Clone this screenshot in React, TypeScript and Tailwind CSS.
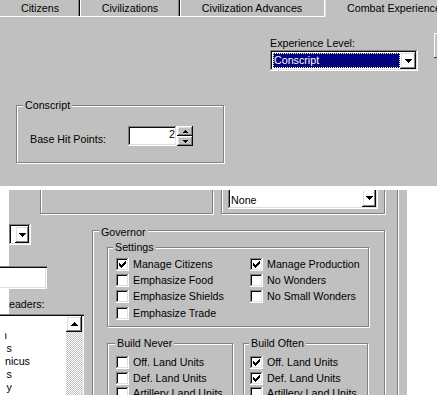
import React from "react";

const F = "font-['Liberation_Sans',Arial,sans-serif] text-[10.7px] leading-[13px] text-black";
const RAISED = "shadow-[inset_-1px_-1px_#0a0a0a,inset_1px_1px_#ffffff,inset_-2px_-2px_#808080,inset_2px_2px_#dfdfdf]";
const SUNKEN = "shadow-[inset_-1px_-1px_#ffffff,inset_1px_1px_#808080,inset_-2px_-2px_#dfdfdf,inset_2px_2px_#0a0a0a]";
const ETCH = "border border-[#808080] shadow-[inset_1px_1px_#ffffff,1px_1px_#ffffff]";

function DownArrow() {
  return (
    <svg width="7" height="4" viewBox="0 0 7 4" shapeRendering="crispEdges">
      <path d="M0 0h7v1H0zM1 1h5v1H1zM2 2h3v1H2zM3 3h1v1H3z" fill="#000" />
    </svg>
  );
}
function UpArrow() {
  return (
    <svg width="7" height="4" viewBox="0 0 7 4" shapeRendering="crispEdges">
      <path d="M3 0h1v1H3zM2 1h3v1H2zM1 2h5v1H1zM0 3h7v1H0z" fill="#000" />
    </svg>
  );
}
function SmallUp() {
  return (
    <svg width="5" height="3" viewBox="0 0 5 3" shapeRendering="crispEdges">
      <path d="M2 0h1v1H2zM1 1h3v1H1zM0 2h5v1H0z" fill="#000" />
    </svg>
  );
}
function SmallDown() {
  return (
    <svg width="5" height="3" viewBox="0 0 5 3" shapeRendering="crispEdges">
      <path d="M0 0h5v1H0zM1 1h3v1H1zM2 2h1v1H2z" fill="#000" />
    </svg>
  );
}
function Check() {
  return (
    <svg width="7" height="7" viewBox="0 0 7 7" shapeRendering="crispEdges">
      <path d="M0 2h1v3H0zM1 3h1v3H1zM2 4h1v3H2zM3 3h1v3H3zM4 2h1v3H4zM5 1h1v3H5zM6 0h1v3H6z" fill="#000" />
    </svg>
  );
}
function CheckBox({ checked }: { checked?: boolean }) {
  return (
    <div className={`w-[13px] h-[13px] shrink-0 bg-white flex items-center justify-center ${SUNKEN}`}>
      {checked && <Check />}
    </div>
  );
}
function CheckRow({ label, checked, h }: { label: string; checked?: boolean; h: string }) {
  return (
    <div className={`flex items-center ${h}`}>
      <CheckBox checked={checked} />
      <span className="ml-[4px] whitespace-nowrap">{label}</span>
    </div>
  );
}

function TopPanel() {
  return (
    <div className={`w-[437px] h-[186px] bg-[#c0c0c0] overflow-hidden ${F}`}>
      <div className="flex h-[17px]">
        <div className="w-[80px] shrink-0 border-b border-white shadow-[inset_-1px_0_#000000,inset_-2px_0_#808080] pt-[1.5px] text-center whitespace-nowrap">
          Citizens
        </div>
        <div className="w-[100px] shrink-0 border-b border-white shadow-[inset_1px_0_#ffffff,inset_-1px_0_#000000,inset_-2px_0_#808080] pt-[1.5px] text-center whitespace-nowrap">
          Civilizations
        </div>
        <div className="w-[144px] shrink-0 border-b border-white shadow-[inset_1px_0_#ffffff] pt-[1.5px] text-center whitespace-nowrap">
          Civilization Advances
        </div>
        <div className="flex-1 shadow-[inset_1px_0_#ffffff,inset_2px_0_#dfdfdf] pt-[1.5px] pl-[23px] whitespace-nowrap overflow-hidden">
          Combat Experience
        </div>
      </div>

      <div className="flex items-start">
        <div className="ml-[270px] w-[148px] shrink-0 pt-[20px]">
          <div className="whitespace-nowrap">Experience Level:</div>
          <div className={`h-[21px] bg-white p-[2px] flex ${SUNKEN}`}>
            <div className="flex-1 my-[1px] ml-[1px] bg-[#000080] text-white border border-dotted border-[#ffffa0] whitespace-nowrap">
              Conscript
            </div>
            <div className={`w-[16px] h-[17px] flex items-center justify-center ${RAISED}`}>
              <DownArrow />
            </div>
          </div>
        </div>
        <div className="ml-[16px] mt-[16px] w-[6px] h-[24px] shrink-0 border-l border-t border-white shadow-[0_1px_#404040]" />
      </div>

      <div className={`ml-[16px] mt-[34px] w-[208px] h-[58px] ${ETCH}`}>
        <div className="w-fit -mt-[7px] ml-[6px] px-[2px] bg-[#c0c0c0] whitespace-nowrap">Conscript</div>
        <div className="flex items-start mt-[14px] ml-[13px]">
          <div className="w-[98px] shrink-0 pt-[7px] whitespace-nowrap">Base Hit Points:</div>
          <div className="flex">
            <div className={`w-[49px] h-[20px] bg-white text-right pr-[2px] pt-[2px] ${SUNKEN}`}>2</div>
            <div className="flex flex-col w-[16px]">
              <div className={`h-[10px] flex items-center justify-center ${RAISED}`}>
                <SmallUp />
              </div>
              <div className={`h-[10px] flex items-center justify-center ${RAISED}`}>
                <SmallDown />
              </div>
            </div>
          </div>
        </div>
      </div>
    </div>
  );
}

function BottomPanel() {
  return (
    <div className="flex mt-[4px]">
      <div className="w-[9px] shrink-0" />
      <div className={`w-[398px] h-[205px] shrink-0 bg-[#c0c0c0] overflow-y-clip ${F}`}>
        <div className="w-[389px] h-full border-r border-[#808080] shadow-[1px_0_#ffffff]">
          {/* Row A */}
          <div className="flex items-start h-[24px]">
            <div className="ml-[31px] w-[173px] h-[24px] shrink-0 border-x border-b border-[#808080] shadow-[inset_1px_0_#ffffff,1px_1px_#ffffff]" />
            <div className="ml-[8px] w-[164px] h-[24px] shrink-0 border-x border-b border-[#808080] shadow-[inset_1px_0_#ffffff,1px_1px_#ffffff] flex items-start">
              <div className={`ml-[6px] -mt-[4px] w-[150px] h-[23px] shrink-0 bg-white flex ${SUNKEN}`}>
                <div className="flex-1 pl-[3px] pt-[8px] whitespace-nowrap">None</div>
                <div className={`w-[14px] h-[19px] mt-[2px] mr-[2px] flex items-center justify-center ${RAISED}`}>
                  <DownArrow />
                </div>
              </div>
            </div>
          </div>

          {/* Row B */}
          <div className="flex items-start">
            <div className="w-[75px] shrink-0 flex flex-col">
              <div className={`mt-[10px] w-[22px] h-[21px] bg-white flex justify-end p-[2px] ${SUNKEN}`}>
                <div className={`w-[14px] h-full flex items-center justify-center ${RAISED}`}>
                  <DownArrow />
                </div>
              </div>
              <div className="mt-[21px] -ml-[9px] w-[47px] h-[23px] bg-white shadow-[inset_0_1px_#808080,inset_0_2px_#0a0a0a,inset_-1px_0_#ffffff,inset_-2px_0_#dfdfdf,inset_0_-1px_#ffffff,inset_0_-2px_#dfdfdf]" />
              <div className="mt-[9px] overflow-hidden">
                <div className="-ml-[6px] whitespace-nowrap">Leaders:</div>
              </div>
              <div className="mt-[3px] -ml-[9px] w-[84px] h-[90px] bg-white flex shadow-[inset_0_1px_#808080,inset_0_2px_#0a0a0a,inset_-1px_0_#ffffff,inset_-2px_0_#dfdfdf]">
                <div className="flex-1 ml-[5px] pt-[2px] overflow-hidden">
                  <div className="h-[13px]" />
                  <div className="h-[13px] -ml-[4px] whitespace-nowrap">n</div>
                  <div className="h-[13px] ml-[1.5px] whitespace-nowrap">s</div>
                  <div className="h-[13px] whitespace-nowrap">nicus</div>
                  <div className="h-[13px] ml-[1.5px] whitespace-nowrap">s</div>
                  <div className="h-[13px] ml-[1.5px] whitespace-nowrap">y</div>
                </div>
                <div className="w-[16px] mt-[2px] mr-[2px] flex flex-col">
                  <div className={`h-[16px] flex items-center justify-center ${RAISED}`}>
                    <UpArrow />
                  </div>
                  <div className="flex-1 bg-[repeating-conic-gradient(#c0c0c0_0_25%,#ffffff_0_50%)] bg-[length:2px_2px]" />
                </div>
              </div>
            </div>

            <div className={`ml-[8px] mt-[16px] w-[293px] h-[200px] shrink-0 ${ETCH}`}>
              <div className="w-fit -mt-[5px] ml-[6px] px-[2px] bg-[#c0c0c0] whitespace-nowrap">Governor</div>
              <div className={`ml-[14px] mt-[8px] w-[262px] h-[80px] ${ETCH}`}>
                <div className="w-fit -mt-[7px] ml-[5px] px-[2px] bg-[#c0c0c0] whitespace-nowrap">Settings</div>
                <div className="flex mt-[2px] ml-[8px]">
                  <div className="w-[134px] shrink-0">
                    <CheckRow h="h-[16.33px]" label="Manage Citizens" checked />
                    <CheckRow h="h-[16.33px]" label="Emphasize Food" />
                    <CheckRow h="h-[16.33px]" label="Emphasize Shields" />
                    <CheckRow h="h-[16.33px]" label="Emphasize Trade" />
                  </div>
                  <div>
                    <CheckRow h="h-[16.33px]" label="Manage Production" checked />
                    <CheckRow h="h-[16.33px]" label="No Wonders" />
                    <CheckRow h="h-[16.33px]" label="No Small Wonders" />
                  </div>
                </div>
              </div>
              <div className="flex ml-[14px] mt-[16px]">
                <div className={`w-[126px] h-[100px] shrink-0 ${ETCH}`}>
                  <div className="w-fit -mt-[7px] ml-[7px] px-[2px] bg-[#c0c0c0] whitespace-nowrap">Build Never</div>
                  <div className="mt-[5px] ml-[8px]">
                    <CheckRow h="h-[15.5px]" label="Off. Land Units" />
                    <CheckRow h="h-[15.5px]" label="Def. Land Units" />
                    <CheckRow h="h-[15.5px]" label="Artillery Land Units" />
                  </div>
                </div>
                <div className={`ml-[10px] w-[125px] h-[100px] shrink-0 ${ETCH}`}>
                  <div className="w-fit -mt-[7px] ml-[5px] px-[2px] bg-[#c0c0c0] whitespace-nowrap">Build Often</div>
                  <div className="mt-[5px] ml-[6px]">
                    <CheckRow h="h-[15.5px]" label="Off. Land Units" checked />
                    <CheckRow h="h-[15.5px]" label="Def. Land Units" checked />
                    <CheckRow h="h-[15.5px]" label="Artillery Land Units" />
                  </div>
                </div>
              </div>
            </div>
          </div>
        </div>
      </div>
    </div>
  );
}

export default function App() {
  return (
    <div className="w-[437px] h-[400px] bg-white overflow-hidden">
      <TopPanel />
      <BottomPanel />
    </div>
  );
}
